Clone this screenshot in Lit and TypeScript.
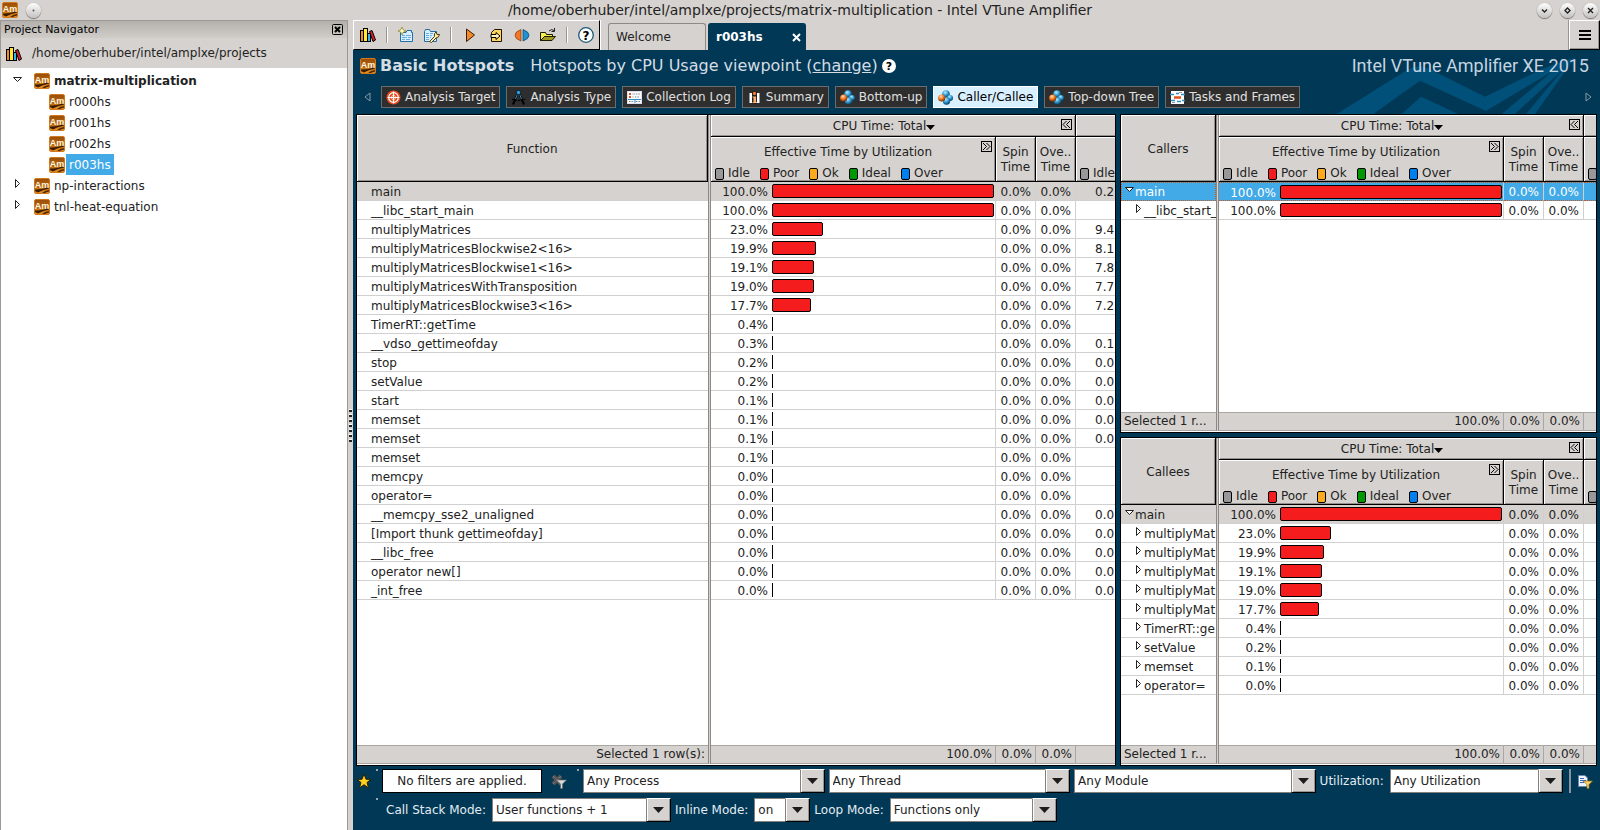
import { LitElement, html, css, nothing } from "lit";
import { customElement, property } from "lit/decorators.js";
import { classMap } from "lit/directives/class-map.js";
import { styleMap } from "lit/directives/style-map.js";

type Row = {
  name: string;
  pct: string;
  next?: string;
  depth?: number;
  twisty?: "open" | "closed";
};

const amIcon = html`<svg class="am" width="16" height="16" viewBox="0 0 16 16" aria-hidden="true">
  <defs>
    <linearGradient id="amg" x1="0" y1="0" x2="0" y2="1">
      <stop offset="0" stop-color="#9a4e0a" />
      <stop offset=".55" stop-color="#b4640f" />
      <stop offset="1" stop-color="#f09420" />
    </linearGradient>
  </defs>
  <rect x=".5" y=".5" width="15" height="15" rx="1.5" fill="url(#amg)" stroke="#d0781c" />
  <path d="M1 13V11.500Q7 12 15 9V10.500Q8 12 4 14.500Z" fill="#3a1c04" />
  <path d="M8 15Q11 12.500 15 12V13.500Q12 14 11 15Z" fill="#4a2506" />
  <text x="8" y="9.500" text-anchor="middle" font-family="Liberation Sans, sans-serif" font-size="9" font-weight="700" fill="#fff6dc">Am</text>
</svg>`;

const booksIcon = html`<svg width="16" height="16" viewBox="0 0 16 16" aria-hidden="true">
  <g stroke="#000">
    <rect x=".5" y="3.500" width="4" height="11" fill="#f08a24" />
    <rect x="3.500" y="1.500" width="4" height="13" fill="#ffe838" />
    <rect x="7.500" y="6.500" width="3" height="8" fill="#35b6f2" />
    <path d="M9.500 4.500L12 3.500L15.500 13L13 14.500Z" fill="#d8202a" />
  </g>
</svg>`;

const spheresIcon = html`<svg width="15" height="15" viewBox="0 0 15 15" aria-hidden="true">
  <defs>
    <radialGradient id="sb" cx=".4" cy=".3" r=".7"><stop offset="0" stop-color="#bfeaff" /><stop offset=".5" stop-color="#2f9fd8" /><stop offset="1" stop-color="#0a3a5c" /></radialGradient>
    <radialGradient id="so" cx=".4" cy=".3" r=".7"><stop offset="0" stop-color="#ffe0b8" /><stop offset=".5" stop-color="#f47a20" /><stop offset="1" stop-color="#7a2c04" /></radialGradient>
  </defs>
  <circle cx="8" cy="4" r="3.800" fill="url(#sb)" />
  <circle cx="12" cy="8" r="3" fill="url(#sb)" />
  <circle cx="8.500" cy="11" r="3.700" fill="url(#sb)" />
  <circle cx="3.700" cy="8" r="3.600" fill="url(#so)" />
</svg>`;

const targetIcon = html`<svg width="15" height="15" viewBox="0 0 15 15" aria-hidden="true">
  <circle cx="7.500" cy="7.500" r="7" fill="#e8481c" />
  <circle cx="7.500" cy="7.500" r="4.800" fill="none" stroke="#fff" stroke-width="1.200" />
  <circle cx="7.500" cy="7.500" r="2.200" fill="#e8481c" stroke="#ffc8b0" stroke-width=".8" />
  <path d="M7.500 1.500V13.500M1.500 7.500H13.500" stroke="#fff" stroke-width="1.200" />
</svg>`;

const compassIcon = html`<svg width="15" height="15" viewBox="0 0 15 15" aria-hidden="true">
  <path d="M6.500 4L2 14.500M8.500 4L13 14.500" stroke="#000" stroke-width="2" fill="none" />
  <path d="M6.500 4L4.500 9M8.500 4L10.500 9" stroke="#3c8fc4" stroke-width="1" fill="none" />
  <path d="M1 9Q7.500 12 14 9" stroke="#000" stroke-width="1.300" stroke-dasharray="2 1" fill="none" />
  <circle cx="7.500" cy="2.500" r="2.200" fill="#2f9fd8" stroke="#000" stroke-width=".7" />
</svg>`;

const logIcon = html`<svg width="15" height="15" viewBox="0 0 15 15" aria-hidden="true">
  <rect x=".5" y="1.500" width="14" height="12" fill="#fff" stroke="#dde" />
  <path d="M2 4H4M2 7H4" stroke="#e0531c" stroke-width="2" />
  <path d="M5.500 4H8M9 4H13M5.500 7H7M8 7H12M2 11.500H7M9 11.500H13" stroke="#77828c" stroke-dasharray="1 .6" />
  <path d="M1 9.500H14M8 9V13" stroke="#2f8fc4" />
</svg>`;

const infoIcon = html`<svg width="15" height="15" viewBox="0 0 15 15" aria-hidden="true">
  <rect x="2.500" y="3" width="10" height="10" fill="#fff" />
  <rect x="5" y="1.500" width="5" height="12" fill="#222" />
  <rect x="6" y="2" width="3" height="3" rx="1" fill="#f47a20" />
  <path d="M5.500 6.500H9V12H10V13H5.500V12H6.500V7.500H5.500Z" fill="#ffb070" />
</svg>`;

const framesIcon = html`<svg width="15" height="15" viewBox="0 0 15 15" aria-hidden="true">
  <rect x="1" y="1" width="13" height="13" fill="#fff" />
  <path d="M0 4.500H4M6 3.500H9M11 4.500H15M1 10.500H5M7 11.500H11M12 10.500H15" stroke="#2f8fc4" stroke-width="1.500" />
  <path d="M4 7.500H11" stroke="#e0531c" stroke-width="2.500" />
  <path d="M2 12.500H5M9 2.500H12" stroke="#99a" />
</svg>`;

const toolIcons = {
  books: booksIcon,
  newProject: html`<svg width="16" height="16" viewBox="0 0 16 16" aria-hidden="true">
    <path d="M2.500 5.500H8L9 3.500H13.500V5.500H14.500V14.500H2.500Z" fill="#d9efff" stroke="#1f6ea6" />
    <path d="M4 8.500H7M8 8.500H13M4 10.500H9M10 10.500H13M4 12.500H7M8 12.500H12" stroke="#6aaee0" />
    <path d="M4 0L5.200 2.800L8 4L5.200 5.200L4 8L2.800 5.200L0 4L2.800 2.800Z" fill="#fffbc0" stroke="#8a7a20" stroke-width=".7" />
  </svg>`,
  configure: html`<svg width="16" height="16" viewBox="0 0 16 16" aria-hidden="true">
    <path d="M.5 4.500L1.500 2.500H5.500L6.500 4.500H12.500V14.500H.5Z" fill="#d9efff" stroke="#1f6ea6" />
    <path d="M2 6.500H9M2 8.500H8M2 10.500H7M2 12.500H6" stroke="#6aaee0" stroke-dasharray="3 1" />
    <path d="M5.500 14.500L10.500 9.500Q9.500 6.500 12 5L13 7.500L15.500 7.500Q15 10.500 12 11L7.500 15.500Z" fill="#fff0a8" stroke="#4a3c10" />
  </svg>`,
  play: html`<svg width="16" height="16" viewBox="0 0 16 16" aria-hidden="true">
    <path d="M4.500 2L12.500 8L4.500 14.500Z" fill="#f58a28" stroke="#3c1c04" />
  </svg>`,
  attach: html`<svg width="16" height="16" viewBox="0 0 16 16" aria-hidden="true">
    <path d="M6.500 2.500H13.500V14.500H3.500V5.500Z" fill="#ffd65c" stroke="#1a1404" />
    <path d="M3 7.500H8V5.500L12 9L8 12.500V10.500H3Z" fill="#fff3c0" stroke="#000" />
  </svg>`,
  compare: html`<svg width="16" height="16" viewBox="0 0 16 16" aria-hidden="true">
    <path d="M7 2.500V14Q1 12 1 8.300T7 2.500Z" fill="#f07a24" stroke="#8a3406" stroke-width=".7" />
    <path d="M9 2.500V14Q15 12 15 8.300T9 2.500Z" fill="#2390d0" stroke="#06436c" stroke-width=".7" />
  </svg>`,
  open: html`<svg width="16" height="16" viewBox="0 0 16 16" aria-hidden="true">
    <path d="M.5 13.500V5.500H5.500L6.500 7.500H12.500V9.500H4.500Z" fill="#f6ee54" stroke="#1c1a00" />
    <path d="M.5 13.500L4.500 9.500H15.500L12 13.500Z" fill="#a09a20" stroke="#1c1a00" />
    <path d="M9 4Q11.500 1.500 14 3.500M14.500 1V4.500H11.500" fill="none" stroke="#222" />
  </svg>`,
  help: html`<svg width="16" height="16" viewBox="0 0 16 16" aria-hidden="true">
    <circle cx="8" cy="8" r="7.300" fill="#fff" stroke="#1d5878" stroke-width="1.300" />
    <text x="8" y="12.500" text-anchor="middle" font-family="DejaVu Sans, sans-serif" font-size="12" font-weight="700" fill="#000">?</text>
  </svg>`,
};

const shared = css`
  * {
    box-sizing: border-box;
  }
  svg {
    display: block;
    flex: none;
  }
  button,
  select {
    font: inherit;
    color: inherit;
    margin: 0;
    padding: 0;
    border: 0;
    background: none;
    border-radius: 0;
  }
`;

const LEGEND = [
  ["Idle", "idle"],
  ["Poor", "poor"],
  ["Ok", "ok"],
  ["Ideal", "ideal"],
  ["Over", "over"],
];

/** Table of CPU time per function, with a utilization bar in each row. */
@customElement("hotspot-grid")
export class HotspotGrid extends LitElement {
  @property() heading = "";
  @property() footer = "";
  @property({ attribute: false }) rows: Row[] = [];
  @property({ type: Boolean }) wide = false;
  @property({ type: Boolean }) focused = false;

  static styles = [
    shared,
    css`
      :host {
        display: block;
        min-width: 0;
        min-height: 0;
        overflow: hidden;
        border: 1px solid #000;
        background: #fff;
        padding-bottom: 1px;
      }
      table {
        width: 100%;
        height: 100%;
        table-layout: fixed;
        border-collapse: separate;
        border-spacing: 0;
        font-size: 12px;
        line-height: 15px;
      }
      th,
      td {
        padding: 0;
        font-weight: 400;
        overflow: hidden;
        white-space: nowrap;
      }
      .c-split {
        width: 3px;
      }
      .c-time {
        width: 285px;
      }
      .c-small {
        width: 40px;
      }
      .c-last {
        width: 12px;
      }
      .c-last.wide {
        width: 39px;
      }
      th {
        padding-top: 2px;
        background: #d6d2cf;
        border-right: 1px solid #000;
        border-bottom: 1px solid #000;
        box-shadow: inset 1px 1px #fff, inset -1px -1px #96928e;
      }
      th.flush {
        padding: 0;
      }
      th.last {
        padding: 0;
        border-right: 0;
        box-shadow: inset 1px 1px #fff, inset 0 -1px #96928e;
      }
      .top th {
        height: 22px;
      }
      .sub th {
        height: 45px;
      }
      .split {
        background: linear-gradient(90deg, #8c8885 1px, #d6d2cf 1px 2px, #8c8885 2px);
      }
      .bar-head {
        display: flex;
        align-items: flex-start;
        padding: 0 3px 0 4px;
      }
      .title {
        flex: 1;
        display: flex;
        align-items: center;
        justify-content: center;
      }
      .top .bar-head {
        padding-top: 2px;
      }
      .top .title {
        padding-right: 8px;
      }
      .box {
        width: 11px;
        height: 11px;
        border: 1px solid #000;
      }
      .time {
        display: flex;
        flex-direction: column;
        justify-content: space-between;
        height: 44px;
        padding-top: 4px;
      }
      .time .title {
        padding-top: 4px;
      }
      .legend {
        display: flex;
        gap: 10px;
        padding-left: 4px;
      }
      .legend span {
        display: flex;
        align-items: flex-end;
        gap: 4px;
      }
      .legend i {
        width: 9px;
        height: 12px;
        margin-bottom: 1px;
        border: 1px solid #000;
        border-radius: 2px;
      }
      .idle {
        background: #98989a;
      }
      .poor {
        background: #f41c1c;
      }
      .ok {
        background: #fcaa20;
      }
      .ideal {
        background: #009800;
      }
      .over {
        background: #0080f0;
      }
      .last .legend {
        height: 44px;
        align-items: flex-end;
      }
      tbody td {
        height: 19px;
        padding-top: 2px;
        line-height: 16px;
        border-bottom: 1px solid #d0d0d0;
      }
      td.num {
        border-right: 1px solid #d0d0d0;
      }
      td.num.small {
        text-align: right;
        padding-right: 4px;
      }
      td.num.meter {
        padding-top: 0;
      }
      td.last {
        padding-left: 19px;
      }
      .name-in {
        display: flex;
        align-items: center;
        height: 16px;
        padding-left: 14px;
      }
      .name-in.tree {
        padding-left: 3px;
      }
      .name-in.tree.deep {
        padding-left: 12px;
      }
      .twisty {
        width: 11px;
        height: 16px;
      }
      .value {
        display: flex;
        align-items: center;
        height: 18px;
      }
      .value span {
        width: 61px;
        padding: 2px 4px 0 0;
        text-align: right;
      }
      .track {
        flex: 1;
        margin-right: 1px;
      }
      .bar {
        height: 14px;
        min-width: 1px;
        background: #f41c1c;
        border: 1px solid #000;
        border-radius: 2px;
      }
      .bar.thin {
        border-width: 0 0 0 1px;
        border-radius: 0;
      }
      tr.current td {
        background-color: #d6d2cf;
      }
      tr.picked td {
        padding-top: 1px;
        background-color: #43aae8;
        color: #fff;
        border-top: 1px dotted #c8581c;
        border-bottom: 1px dotted #c8581c;
      }
      tr.picked td.meter {
        padding-top: 0;
      }
      tr.picked .value {
        height: 16px;
      }
      tr.picked td.name {
        border-left: 1px dotted #c8581c;
        border-right: 1px dotted #c8581c;
      }
      tr.picked .name-in.tree {
        padding-left: 2px;
      }
      tr td.split,
      tr.picked td.split {
        border: 0;
      }
      tr.fill td {
        height: auto;
        border: 0;
      }
      tfoot td {
        height: 19px;
        background-color: #d6d2cf;
        border-top: 1px solid #aaa6a2;
        border-bottom: 1px solid #aaa6a2;
      }
      tfoot td.num {
        border-right-color: #aaa6a2;
        text-align: right;
        padding-right: 3px;
      }
      tfoot td.name {
        padding: 0 3px;
      }
      tfoot td.right {
        text-align: right;
      }
    `,
  ];

  private chevrons(dir: "left" | "right") {
    return html`<button class="box" aria-label=${dir === "left" ? "Collapse" : "Expand"}>
      <svg width="9" height="9" viewBox="0 0 9 9">
        <path
          d=${dir === "left" ? "M4.500 1L1 4.500L4.500 8M8 1L4.500 4.500L8 8" : "M1 1L4.500 4.500L1 8M4.500 1L8 4.500L4.500 8"}
          fill="none"
          stroke="#000"
        />
      </svg>
    </button>`;
  }

  private twisty(kind: "open" | "closed") {
    return html`<svg class="twisty" viewBox="0 0 11 16">
      <path
        d=${kind === "open" ? "M1.500 3.500H9.500L5.500 7.500Z" : "M3.500 1.500L7.500 5.500L3.500 9.500Z"}
        fill=${kind === "open" ? "#fff" : "none"}
        stroke="#222"
      />
    </svg>`;
  }

  private renderRow(r: Row, i: number) {
    const n = parseFloat(r.pct);
    return html`<tr class=${classMap({ current: i === 0 && !this.focused, picked: i === 0 && this.focused })}>
      <td class="name">
        <div class=${classMap({ "name-in": true, tree: !!r.twisty, deep: !!r.depth })}>
          ${r.twisty ? this.twisty(r.twisty) : nothing}${r.name}
        </div>
      </td>
      <td class="split"></td>
      <td class="num meter">
        <div class="value">
          <span>${r.pct}</span>
          <div class="track">
            <div class=${classMap({ bar: true, thin: n < 1 })} style=${styleMap({ width: n < 1 ? "0" : `${n}%` })}></div>
          </div>
        </div>
      </td>
      <td class="num small">0.0%</td>
      <td class="num small">0.0%</td>
      <td class="last">${r.next ?? ""}</td>
    </tr>`;
  }

  render() {
    return html`<table>
      <colgroup>
        <col />
        <col class="c-split" />
        <col class="c-time" />
        <col class="c-small" />
        <col class="c-small" />
        <col class=${classMap({ "c-last": true, wide: this.wide })} />
      </colgroup>
      <thead>
        <tr class="top">
          <th rowspan="2">${this.heading}</th>
          <td class="split" rowspan="2"></td>
          <th class="flush" colspan="3">
            <div class="bar-head">
              <div class="title">
                CPU Time: Total
                <svg width="9" height="6" viewBox="0 0 9 6"><path d="M0 1H9L4.500 6Z" /></svg>
              </div>
              ${this.chevrons("left")}
            </div>
          </th>
          <th class="last"></th>
        </tr>
        <tr class="sub">
          <th class="flush">
            <div class="time">
              <div class="bar-head">
                <div class="title">Effective Time by Utilization</div>
                ${this.chevrons("right")}
              </div>
              <div class="legend">${LEGEND.map(([t, c]) => html`<span><i class=${c}></i>${t}</span>`)}</div>
            </div>
          </th>
          <th>Spin<br />Time</th>
          <th>Ove..<br />Time</th>
          <th class="last">
            <div class="legend"><span><i class="idle"></i>${this.wide ? "Idle" : nothing}</span></div>
          </th>
        </tr>
      </thead>
      <tbody>
        ${this.rows.map((r, i) => this.renderRow(r, i))}
        <tr class="fill">
          <td></td>
          <td class="split"></td>
          <td colspan="4"></td>
        </tr>
      </tbody>
      <tfoot>
        <tr>
          <td class=${classMap({ name: true, right: this.wide })}>${this.footer}</td>
          <td class="split"></td>
          <td class="num">100.0%</td>
          <td class="num">0.0%</td>
          <td class="num">0.0%</td>
          <td></td>
        </tr>
      </tfoot>
    </table>`;
  }
}

/** Drop-down with a raised arrow button at its right end. */
const dropdown = (id: string, value: string, cls: string, label?: string) => html`<div class="drop ${cls}">
  <select id=${id} aria-label=${label ?? nothing}>
    <option>${value}</option>
  </select>
  <span class="arrow"><svg width="11" height="6" viewBox="0 0 11 6"><path d="M0 0H11L5.500 6Z" fill="#1c1c1c" /></svg></span>
</div>`;

const FUNCTIONS: Row[] = [
  { name: "main", pct: "100.0%", next: "0.2" },
  { name: "__libc_start_main", pct: "100.0%" },
  { name: "multiplyMatrices", pct: "23.0%", next: "9.4" },
  { name: "multiplyMatricesBlockwise2<16>", pct: "19.9%", next: "8.1" },
  { name: "multiplyMatricesBlockwise1<16>", pct: "19.1%", next: "7.8" },
  { name: "multiplyMatricesWithTransposition", pct: "19.0%", next: "7.7" },
  { name: "multiplyMatricesBlockwise3<16>", pct: "17.7%", next: "7.2" },
  { name: "TimerRT::getTime", pct: "0.4%" },
  { name: "__vdso_gettimeofday", pct: "0.3%", next: "0.1" },
  { name: "stop", pct: "0.2%", next: "0.0" },
  { name: "setValue", pct: "0.2%", next: "0.0" },
  { name: "start", pct: "0.1%", next: "0.0" },
  { name: "memset", pct: "0.1%", next: "0.0" },
  { name: "memset", pct: "0.1%", next: "0.0" },
  { name: "memset", pct: "0.1%" },
  { name: "memcpy", pct: "0.0%" },
  { name: "operator=", pct: "0.0%" },
  { name: "__memcpy_sse2_unaligned", pct: "0.0%", next: "0.0" },
  { name: "[Import thunk gettimeofday]", pct: "0.0%", next: "0.0" },
  { name: "__libc_free", pct: "0.0%", next: "0.0" },
  { name: "operator new[]", pct: "0.0%", next: "0.0" },
  { name: "_int_free", pct: "0.0%", next: "0.0" },
];

const CALLERS: Row[] = [
  { name: "main", pct: "100.0%", twisty: "open" },
  { name: "__libc_start_", pct: "100.0%", twisty: "closed", depth: 1 },
];

const CALLEES: Row[] = [
  { name: "main", pct: "100.0%", twisty: "open" },
  ...[
    ["multiplyMat", "23.0%"],
    ["multiplyMat", "19.9%"],
    ["multiplyMat", "19.1%"],
    ["multiplyMat", "19.0%"],
    ["multiplyMat", "17.7%"],
    ["TimerRT::ge", "0.4%"],
    ["setValue", "0.2%"],
    ["memset", "0.1%"],
    ["operator=", "0.0%"],
  ].map(([name, pct]): Row => ({ name, pct, twisty: "closed", depth: 1 })),
];

const VIEWS = [
  ["Analysis Target", targetIcon],
  ["Analysis Type", compassIcon],
  ["Collection Log", logIcon],
  ["Summary", infoIcon],
  ["Bottom-up", spheresIcon],
  ["Caller/Callee", spheresIcon],
  ["Top-down Tree", spheresIcon],
  ["Tasks and Frames", framesIcon],
] as const;

@customElement("app-root")
export class AppRoot extends LitElement {
  static styles = [
    shared,
    css`
      :host {
        display: grid;
        grid-template-rows: 20px minmax(0, 1fr);
        height: 100vh;
        overflow: hidden;
        background: #d6d2cf;
        color: #222;
        font-family: "DejaVu Sans", sans-serif;
        font-size: 12px;
        line-height: 15px;
      }
      .titlebar {
        display: flex;
        align-items: center;
        padding: 0 2px;
      }
      .titlebar h1 {
        flex: 1;
        margin: 0;
        text-align: center;
        font-size: 14px;
        font-weight: 400;
        line-height: 20px;
      }
      .side-a,
      .side-b {
        display: flex;
        align-items: center;
        gap: 8px;
        width: 64px;
      }
      .side-b {
        justify-content: flex-end;
      }
      .round {
        width: 15px;
        height: 15px;
        border-radius: 50%;
        background: linear-gradient(#fdfdfd, #c4c2c0);
        box-shadow: 0 1px 1px #77736f, 0 0 1px #999;
      }
      .body {
        display: grid;
        grid-template-columns: 348px 5px minmax(0, 1fr);
        min-height: 0;
      }
      .grip {
        align-self: center;
        justify-self: center;
        width: 3px;
        height: 33px;
        background: repeating-linear-gradient(#fff 0 1px, #222 1px 3px, #d6d2cf 3px 5px);
      }
      .nav {
        display: flex;
        flex-direction: column;
        border: 1px solid #9c9894;
        border-bottom: 0;
      }
      .nav-head {
        display: flex;
        align-items: center;
        justify-content: space-between;
        height: 17px;
        padding: 0 4px 0 3px;
        background: linear-gradient(#b4b0ac, #d0ccc8);
        color: #000;
      }
      .nav-head h2 {
        margin: 0;
        font-size: 11px;
        font-weight: 400;
      }
      .nav-path {
        display: flex;
        align-items: center;
        gap: 10px;
        height: 30px;
        padding: 1px 0 0 5px;
      }
      .tree {
        flex: 1;
        margin: 0;
        padding: 2px 0 0;
        background: #fff;
        list-style: none;
      }
      .tree ul {
        margin: 0;
        padding: 0;
        list-style: none;
      }
      .node {
        display: flex;
        align-items: center;
        height: 21px;
        padding-left: 10px;
      }
      .node.leaf {
        padding-left: 48px;
      }
      .node button {
        width: 23px;
      }
      .node span {
        padding: 1px 3px 0 4px;
        line-height: 20px;
      }
      .node .bold {
        font-weight: 700;
      }
      .node .sel {
        margin-left: 1px;
        padding-left: 3px;
        background: #43aae8;
        color: #fff;
      }
      .main {
        display: grid;
        grid-template-rows: 30px minmax(0, 1fr);
        min-width: 0;
        min-height: 0;
      }
      .toprow {
        display: flex;
        align-items: stretch;
      }
      .tools {
        display: flex;
        align-items: center;
        padding-left: 1px;
        border: 1px solid #fff;
        border-right: 1px solid #000;
        border-bottom: 1px solid #000;
        box-shadow: 1px 0 #fff;
      }
      .tools button {
        display: flex;
        justify-content: center;
        width: 26px;
      }
      .tools .sep {
        width: 2px;
        height: 16px;
        margin: 0 5px;
        background: linear-gradient(90deg, #98948f 50%, #fff 50%);
      }
      .tabs {
        display: flex;
        align-items: flex-end;
        gap: 2px;
        flex: 1;
        padding-left: 8px;
      }
      .tab {
        height: 27px;
        width: 98px;
        padding: 0 7px;
        display: flex;
        align-items: center;
        justify-content: space-between;
        border: 1px solid #8c8884;
        border-bottom: 0;
        border-radius: 3px 3px 0 0;
      }
      .tab.on {
        padding-right: 4px;
        background: #003856;
        border-color: #003856;
        color: #fff;
        font-weight: 700;
      }
      .menu {
        display: flex;
        align-items: center;
        justify-content: center;
        width: 31px;
        border: 1px solid;
        border-color: #fff #000 #000 #fff;
        box-shadow: -1px 0 #98948f, inset -1px -1px #98948f;
      }
      .result {
        position: relative;
        display: grid;
        grid-template-rows: 64px minmax(0, 1fr) 64px;
        min-width: 0;
        min-height: 0;
        padding: 0 3px;
        background: #003856;
        color: #e4ecf2;
      }
      .swoosh {
        position: absolute;
        top: 0;
        right: 0;
      }
      .head {
        position: relative;
      }
      .line {
        display: flex;
        align-items: center;
        height: 30px;
        padding: 1px 8px 0 4px;
        font-size: 16px;
        line-height: 20px;
        color: #d4dde4;
      }
      .line h2 {
        margin: 0 16px 0 4px;
        font-size: 16px;
      }
      .line a {
        color: inherit;
      }
      .line .q {
        margin-left: 4px;
      }
      .brand {
        margin-left: auto;
        font-family: Roboto, sans-serif;
        font-size: 18px;
        color: #c4d4e0;
      }
      .views {
        display: flex;
        align-items: center;
        gap: 6px;
        padding: 6px 5px 0 8px;
      }
      .views .prev {
        width: 11px;
      }
      .views .next {
        margin-left: auto;
      }
      .view {
        display: flex;
        align-items: center;
        gap: 4px;
        height: 22px;
        padding: 0 4px;
        border: 1px solid #6c6c6c;
        background: #2e2e2e;
        color: #e0e0e0;
        white-space: nowrap;
      }
      .view.on {
        background: #d8f0ff;
        border-color: #fff;
        color: #000;
      }
      .panes {
        display: grid;
        grid-template-columns: minmax(0, 760fr) minmax(0, 477fr);
        grid-template-rows: minmax(0, 319fr) minmax(0, 329fr);
        gap: 4px;
        color: #222;
        min-height: 0;
      }
      .panes > :first-child {
        grid-row: span 2;
      }
      .filters {
        display: flex;
        flex-direction: column;
        gap: 5px;
        padding-top: 3px;
      }
      .frow {
        display: flex;
        align-items: center;
        gap: 4px;
        height: 24px;
      }
      .dot {
        align-self: flex-start;
        width: 2px;
        height: 2px;
        background: #9aa4ac;
      }
      .nofilter {
        width: 160px;
        height: 24px;
        border: 1px solid #000;
        background: #fff;
        color: #222;
        text-align: center;
        line-height: 22px;
      }
      .clear {
        margin: 0 6px 0 5px;
      }
      .drop {
        display: grid;
        grid-template-columns: minmax(0, 1fr) 23px;
        height: 24px;
        background: #fff;
        color: #222;
        border: 1px solid #84807c;
      }
      .drop select {
        grid-area: 1 / 1 / 2 / 3;
        appearance: none;
        padding-left: 3px;
        width: 100%;
      }
      .arrow {
        grid-area: 1 / 2;
        display: flex;
        align-items: center;
        justify-content: center;
        margin: -1px;
        background: #d6d2cf;
        border: 1px solid;
        border-color: #fff #000 #000 #84807c;
        box-shadow: inset 1px 0 #fff, inset -1px -1px #98948f;
        pointer-events: none;
      }
      .grow {
        flex: 242 1 0;
      }
      .util {
        flex: 173 1 0;
      }
      .w-stack {
        width: 179px;
      }
      .w-inline {
        width: 56px;
      }
      .w-loop {
        width: 167px;
      }
      .indent {
        width: 16px;
      }
      .frow label {
        padding: 0 2px 0 0;
        white-space: nowrap;
      }
      .vsep {
        width: 2px;
        height: 24px;
        margin: 0 2px;
        background: #8a949c;
      }
      .report {
        margin-right: 4px;
      }
    `,
  ];

  private navNode(name: string, open: boolean, cls: string, kids: string[] = []) {
    return html`<li>
      <div class="node">
        <button aria-label="Toggle ${name}">
          <svg width="12" height="14" viewBox="0 0 12 14">
            <path d=${open ? "M2.500 3.500H10.500L6.500 7.500Z" : "M4.500 .5L8.500 4.500L4.500 8.500Z"} fill="none" stroke="#222" />
          </svg>
        </button>
        ${amIcon}<span class=${cls}>${name}</span>
      </div>
      ${kids.length
        ? html`<ul>
            ${kids.map((k) => html`<li class="node leaf">${amIcon}<span class=${k === "r003hs" ? "sel" : ""}>${k}</span></li>`)}
          </ul>`
        : nothing}
    </li>`;
  }

  private tool(icon: keyof typeof toolIcons, label: string) {
    return html`<button aria-label=${label}>${toolIcons[icon]}</button>`;
  }

  render() {
    return html`
      <header class="titlebar">
        <div class="side-a">
          ${amIcon}
          <button class="round" aria-label="Pin window">
            <svg width="15" height="15"><circle cx="7.500" cy="7.500" r="1" fill="#555" /></svg>
          </button>
        </div>
        <h1>/home/oberhuber/intel/amplxe/projects/matrix-multiplication - Intel VTune Amplifier</h1>
        <div class="side-b">
          ${[
            ["Minimize", "M5 6.500L7.500 9L10 6.500"],
            ["Maximize", "M7.500 5L10 7.500L7.500 10L5 7.500Z"],
            ["Close", "M5 5L10 10M10 5L5 10"],
          ].map(
            ([l, d]) => html`<button class="round" aria-label=${l}>
              <svg width="15" height="15"><path d=${d} fill="none" stroke="#222" stroke-width="1.400" /></svg>
            </button>`
          )}
        </div>
      </header>
      <div class="body">
        <aside class="nav">
          <div class="nav-head">
            <h2>Project Navigator</h2>
            <button aria-label="Close navigator">
              <svg width="11" height="11" viewBox="0 0 11 11">
                <rect x=".5" y=".5" width="10" height="10" rx="1" fill="none" stroke="#000" />
                <path d="M3 3L8 8M8 3L3 8" stroke="#000" stroke-width="2" />
              </svg>
            </button>
          </div>
          <div class="nav-path">${booksIcon}<span>/home/oberhuber/intel/amplxe/projects</span></div>
          <ul class="tree">
            ${this.navNode("matrix-multiplication", true, "bold", ["r000hs", "r001hs", "r002hs", "r003hs"])}
            ${this.navNode("np-interactions", false, "")} ${this.navNode("tnl-heat-equation", false, "")}
          </ul>
        </aside>
        <div class="grip"></div>
        <main class="main">
          <div class="toprow">
            <div class="tools">
              ${this.tool("books", "Projects")}<span class="sep"></span>${this.tool("newProject", "New project")}${this.tool(
                "configure",
                "Configure project"
              )}<span class="sep"></span>${this.tool("play", "New analysis")}${this.tool("attach", "Import result")}${this.tool(
                "compare",
                "Compare results"
              )}${this.tool("open", "Open result")}<span class="sep"></span>${this.tool("help", "Help")}
            </div>
            <div class="tabs">
              <button class="tab">Welcome</button>
              <button class="tab on">
                r003hs
                <svg width="9" height="9" viewBox="0 0 9 9"><path d="M1 1L8 8M8 1L1 8" stroke="#fff" stroke-width="2" /></svg>
              </button>
            </div>
            <button class="menu" aria-label="Menu">
              <svg width="12" height="10"><path d="M0 1H12M0 5H12M0 9H12" stroke="#000" stroke-width="2" /></svg>
            </button>
          </div>
          <section class="result">
            <svg class="swoosh" width="267" height="64" viewBox="669 150 801 192" aria-hidden="true">
              <g fill="#00507a">
                <path d="M680 342L895 208Q930 190 965 210L1125 290L1300 205L1400 170L1128 333L930 242L790 342Z" />
                <path d="M875 342L933 290L1045 342Z" />
                <path d="M1175 342L1350 195L1390 180L1215 342Z" />
                <path d="M1248 342L1350 220L1390 180L1275 342Z" />
              </g>
            </svg>
            <div class="head">
              <div class="line">
                ${amIcon}
                <h2>Basic Hotspots</h2>
                <span>Hotspots by CPU Usage viewpoint (<a href="#">change</a>)</span>
                <svg class="q" width="14" height="14" viewBox="0 0 14 14">
                  <circle cx="7" cy="7" r="7" fill="#fff" />
                  <text x="7" y="11" text-anchor="middle" font-family="DejaVu Sans, sans-serif" font-size="11" font-weight="700" fill="#000">?</text>
                </svg>
                <span class="brand">Intel VTune Amplifier XE 2015</span>
              </div>
              <nav class="views">
                <button class="prev" aria-label="Scroll left">
                  <svg width="7" height="10"><path d="M6 1V9L1 5Z" fill="none" stroke="#8a9aa6" /></svg>
                </button>
                ${VIEWS.map(
                  ([t, icon]) => html`<button class=${classMap({ view: true, on: t === "Caller/Callee" })}>${icon}${t}</button>`
                )}
                <button class="next" aria-label="Scroll right">
                  <svg width="7" height="10"><path d="M1 1V9L6 5Z" fill="none" stroke="#8a9aa6" /></svg>
                </button>
              </nav>
            </div>
            <div class="panes">
              <hotspot-grid wide heading="Function" footer="Selected 1 row(s):" .rows=${FUNCTIONS}></hotspot-grid>
              <hotspot-grid focused heading="Callers" footer="Selected 1 r..." .rows=${CALLERS}></hotspot-grid>
              <hotspot-grid heading="Callees" footer="Selected 1 r..." .rows=${CALLEES}></hotspot-grid>
            </div>
            <div class="filters">
              <div class="frow">
                <svg width="16" height="16" viewBox="0 0 16 16">
                  <path d="M8 1L10 6.300H15L11 9.500L12.500 15L8 11.700L3.500 15L5 9.500L1 6.300H6Z" fill="#fcd020" stroke="#2a2000" />
                </svg>
                <i class="dot"></i>
                <div class="nofilter">No filters are applied.</div>
                <button class="clear" aria-label="Clear filters">
                  <svg width="16" height="16" viewBox="0 0 16 16">
                    <path d="M2 3L10 11M10 3L2 11" stroke="#555" stroke-width="4" />
                    <path d="M2 3L10 11M10 3L2 11" stroke="#888" stroke-width="1" stroke-dasharray="1 1" />
                    <path d="M5.500 7H15.500L11.500 11V15.500H9.500V11Z" fill="#d8d8d8" stroke="#666" stroke-width=".6" />
                  </svg>
                </button>
                <i class="dot"></i>
                ${dropdown("process", "Any Process", "grow", "Process")} ${dropdown("thread", "Any Thread", "grow", "Thread")}
                ${dropdown("module", "Any Module", "grow", "Module")}
                <label for="util">Utilization:</label>
                ${dropdown("util", "Any Utilization", "util")}
                <i class="vsep"></i>
                <button class="report" aria-label="Filter report">
                  <svg width="16" height="16" viewBox="0 0 16 16">
                    <path d="M1.500 2.500H8L10.500 5V13.500H1.500Z" fill="#eef4fc" stroke="#6a86b0" />
                    <path d="M3 5.500H7M3 7.500H9M3 9.500H7" stroke="#3a68c8" />
                    <path d="M6 8H15.500L12 11.500V15.500H10V11.500Z" fill="#fcd868" stroke="#8a6a10" stroke-width=".7" />
                  </svg>
                </button>
              </div>
              <div class="frow">
                <span class="indent"></span>
                <i class="dot"></i>
                <span></span>
                <label for="stack">Call Stack Mode:</label>
                ${dropdown("stack", "User functions + 1", "w-stack")}
                <label for="inline">Inline Mode:</label>
                ${dropdown("inline", "on", "w-inline")}
                <label for="loop">Loop Mode:</label>
                ${dropdown("loop", "Functions only", "w-loop")}
              </div>
            </div>
          </section>
        </main>
      </div>
    `;
  }
}
